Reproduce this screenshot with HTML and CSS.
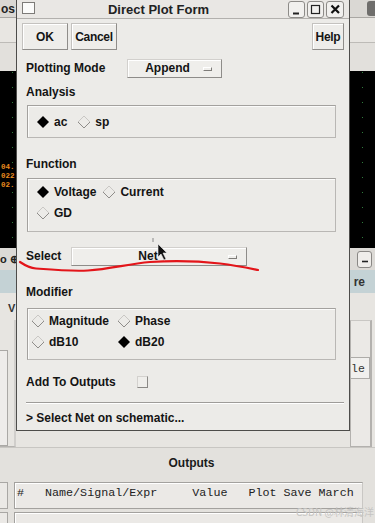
FILE: index.html
```html
<!DOCTYPE html>
<html>
<head>
<meta charset="utf-8">
<link rel="stylesheet" href="styles.css">
</head>
<body>
<div class="desktop">
  <div class="bg-title"><span class="bg-title-text">os</span><span class="bg-title-btn"></span></div>
  <div class="bg-toolbar"><div class="bg-toolbar-top"></div></div>
  <div class="bg-plot">
    <div class="plot-left"><span>04.</span><span>022</span><span>02.</span></div>
    <div class="plot-right"></div>
  </div>
  <div class="bg-bar"><span class="bg-bar-text">o ⊕</span><span class="mini-btn"><svg width="8" height="8" viewBox="0 0 8 8"><path d="M1 6.5H7" stroke="#222" stroke-width="1.6"/></svg></span></div>
  <div class="bg-header"><span>re</span></div>
  <div class="bg-body">
    <div class="body-left">
      <div class="v-text">V</div>
      <div class="left-frame"><div class="left-box"></div></div>
    </div>
    <div class="body-right">
      <div class="right-frame"><div class="le-box">le</div></div>
    </div>
  </div>
  <div class="bg-outputs">
    <div class="outputs-title">Outputs</div>
    <div class="out-row"><div class="mini-cell"></div><div class="out-cell out-head">#   Name/Signal/Expr     Value   Plot Save March</div></div>
    <div class="out-row"><div class="mini-cell"></div><div class="out-cell"></div></div>
  </div>
</div>

<div class="dialog">
  <div class="dlg-title">
    <span class="dlg-icon"></span>
    <span class="dlg-title-text">Direct Plot Form</span>
    <span class="wbtn"><svg width="15" height="15" viewBox="0 0 15 15"><path d="M4 11.5H10" stroke="#222" stroke-width="2"/></svg></span>
    <span class="wbtn"><svg width="15" height="15" viewBox="0 0 15 15"><rect x="3.5" y="3.5" width="8" height="8" fill="none" stroke="#222" stroke-width="1.2"/></svg></span>
    <span class="wbtn wbtn-x"><svg width="15" height="15" viewBox="0 0 15 15"><path d="M3.5 3.5L11 11M11 3.5L3.5 11" stroke="#111" stroke-width="2.2"/></svg></span>
  </div>
  <div class="dlg-buttons">
    <div class="btn btn-ok">OK</div>
    <div class="btn btn-cancel">Cancel</div>
    <div class="spacer"></div>
    <div class="btn btn-help">Help</div>
  </div>
  <div class="dlg-body">
    <div class="row row-mode">
      <span class="lbl lbl-mode">Plotting Mode</span>
      <span class="combo combo-mode"><span class="combo-text">Append</span><span class="combo-ind"></span></span>
    </div>
    <div class="section-label sl-analysis">Analysis</div>
    <div class="group group-analysis">
      <span class="radio"><svg class="dia" width="14" height="14" viewBox="0 0 14 14"><path d="M7 1L13 7L7 13L1 7Z" fill="#000"/></svg>ac</span>
      <span class="radio radio-sp"><svg class="dia" width="14" height="14" viewBox="0 0 14 14"><path d="M1 7L7 1L13 7" fill="none" stroke="#c9c7c4"/><path d="M1 7L7 13L13 7" fill="none" stroke="#8e8c89"/></svg>sp</span>
    </div>
    <div class="section-label sl-function">Function</div>
    <div class="group group-function">
      <div class="grow">
        <span class="radio"><svg class="dia" width="14" height="14" viewBox="0 0 14 14"><path d="M7 1L13 7L7 13L1 7Z" fill="#000"/></svg>Voltage</span>
        <span class="radio radio-current"><svg class="dia" width="14" height="14" viewBox="0 0 14 14"><path d="M1 7L7 1L13 7" fill="none" stroke="#c9c7c4"/><path d="M1 7L7 13L13 7" fill="none" stroke="#8e8c89"/></svg>Current</span>
      </div>
      <div class="grow">
        <span class="radio"><svg class="dia" width="14" height="14" viewBox="0 0 14 14"><path d="M1 7L7 1L13 7" fill="none" stroke="#c9c7c4"/><path d="M1 7L7 13L13 7" fill="none" stroke="#8e8c89"/></svg>GD</span>
      </div>
    </div>
    <div class="row row-select">
      <span class="lbl lbl-select">Select</span>
      <span class="combo combo-select"><span class="combo-text">Net</span><span class="combo-ind"></span></span>
    </div>
    <div class="section-label sl-modifier">Modifier</div>
    <div class="group group-modifier">
      <span class="radio"><svg class="dia" width="14" height="14" viewBox="0 0 14 14"><path d="M1 7L7 1L13 7" fill="none" stroke="#c9c7c4"/><path d="M1 7L7 13L13 7" fill="none" stroke="#8e8c89"/></svg>Magnitude</span>
      <span class="radio"><svg class="dia" width="14" height="14" viewBox="0 0 14 14"><path d="M1 7L7 1L13 7" fill="none" stroke="#c9c7c4"/><path d="M1 7L7 13L13 7" fill="none" stroke="#8e8c89"/></svg>Phase</span>
      <span class="radio"><svg class="dia" width="14" height="14" viewBox="0 0 14 14"><path d="M1 7L7 1L13 7" fill="none" stroke="#c9c7c4"/><path d="M1 7L7 13L13 7" fill="none" stroke="#8e8c89"/></svg>dB10</span>
      <span class="radio"><svg class="dia" width="14" height="14" viewBox="0 0 14 14"><path d="M7 1L13 7L7 13L1 7Z" fill="#000"/></svg>dB20</span>
    </div>
    <div class="row row-add">
      <span class="lbl lbl-add">Add To Outputs</span>
      <span class="checkbox"></span>
    </div>
    <div class="separator"></div>
    <div class="select-net">&gt; Select Net on schematic...</div>
  </div>
</div>

<svg class="overlay" width="375" height="523" viewBox="0 0 375 523">
  <path d="M20 262 C26 266 30 268 36 268.5 C55 270 72 271.5 88 270.5 C110 269 128 264 150 262 C172 260.5 198 261 220 263.5 C236 265.5 248 268 258 270" fill="none" stroke="#e3151a" stroke-width="2.2" stroke-linecap="round"/>
  <path d="M153 238V242" stroke="#888" stroke-width="1"/>
  <path d="M158 244L158 257L161 254L164 260L166 259L163 253L167 253Z" fill="#111" stroke="#eee" stroke-width="0.6"/>
</svg>
<div class="watermark">CSDN @林清海洋</div>
</body>
</html>
```

FILE: styles.css
```css
* { box-sizing: border-box; margin: 0; padding: 0; }
html, body { width: 375px; height: 523px; overflow: hidden; }
body {
  font-family: "Liberation Sans", Arial, sans-serif;
  font-weight: bold;
  font-size: 12px;
  color: #141414;
  background: #e5e3df;
  position: relative;
}

/* ---------- background windows ---------- */
.desktop { width: 375px; height: 523px; display: flex; flex-direction: column; }
.bg-title {
  height: 18px; flex: none; display: flex; align-items: center; justify-content: space-between;
  background: #dad8d4; border-bottom: 1px solid #a9a7a3; overflow: hidden;
}
.bg-title-text { font-size: 12px; margin-left: 1px; color: #222; }
.bg-title-btn { width: 14px; height: 15px; margin-right: -6px; background: #6f6e6c; border-radius: 3px; }
.bg-toolbar { height: 53px; flex: none; background: #e2e0dc; }
.bg-toolbar-top { height: 25px; border-bottom: 1px solid #bdbbb7; background: #e8e6e2; }
.bg-plot { height: 177px; flex: none; background: #000; display: flex; justify-content: space-between; }
.plot-left {
  width: 17px; display: flex; flex-direction: column; padding-top: 92px;
  background: linear-gradient(#2e7c3c 0 1px, transparent 1px) 12px 1px / 1px 15px repeat-y;
  font-family: "Liberation Mono", monospace; font-size: 7.5px; line-height: 9px; color: #e88a1e;
  white-space: nowrap;
}
.plot-left span { margin-left: 1px; }
.plot-right {
  width: 25px;
  background: linear-gradient(#2e7c3c 0 1px, transparent 1px) 12px 1px / 1px 15px repeat-y;
}
.bg-bar { height: 22px; flex: none; background: #dcdad6; display: flex; justify-content: space-between; align-items: center; }
.bg-bar-text { font-size: 11px; margin-left: 0; color: #222; }
.mini-btn {
  width: 15px; height: 17px; margin-right: 3px; border: 1px solid #8a8885; border-radius: 3px;
  background: #efedea; display: flex; align-items: center; justify-content: center;
}
.bg-header { height: 23px; flex: none; background: #c4d2d5; display: flex; justify-content: flex-end; align-items: flex-end; padding: 0 10px 4px 0; }
.bg-header span { font-size: 12px; color: #333; }
.bg-body { height: 154px; flex: none; display: flex; justify-content: space-between; background: #e7e5e1; }
.body-left { width: 17px; display: flex; flex-direction: column; }
.v-text { height: 27px; padding: 9px 0 0 8px; font-size: 11px; color: #333; }
.left-frame { flex: 1; width: 16px; border-right: 2px solid #d0cecb; border-bottom: 1px solid #b5b3b0; }
.left-box { width: 8px; height: 96px; margin-top: 30px; border: 1px solid #aaa8a5; border-left: none; background: #eeecea; }
.body-right { width: 25px; display: flex; flex-direction: column; justify-content: flex-end; }
.right-frame {
  height: 127px; margin-right: 3px; padding-top: 36px; border: 1px solid #b3b1ae; border-top-color: #c9c7c4;
  border-right-width: 2px; background: #ebe9e6;
}
.le-box {
  height: 22px; border: 1px solid #aeaca9; border-left: none; padding: 4px 0 0 0;
  font-family: "Liberation Mono", monospace; font-weight: normal; font-size: 11.5px; color: #333; background: #f1f0ee;
}
.bg-outputs { flex: 1; background: #e3e1dd; border-top: 1px solid #c8c6c2; }
.outputs-title { text-align: center; padding: 8px 0 0 8px; line-height: 14px; height: 34px; color: #1a1a1a; }
.out-row { display: flex; height: 27px; margin-bottom: 3px; }
.mini-cell { width: 8px; border: 1px solid #a9a7a4; border-left: none; background: #ebe9e6; }
.out-cell {
  width: 349px; margin-left: 6px; border: 1px solid #a3a19e; border-right-color: #c9c7c4;
  background: #ebe9e6; box-shadow: inset 1px 1px 0 #fff;
}
.out-head {
  font-family: "Liberation Mono", "Courier New", monospace; font-weight: normal; font-size: 11.7px;
  white-space: pre; padding: 3px 0 0 2px; color: #222;
}

/* ---------- dialog ---------- */
.dialog {
  position: absolute; left: 16px; top: 0; width: 334px; height: 431px;
  background: #ecebe8; border: 1px solid #4d4c4a; border-top: none;
  display: flex; flex-direction: column;
}
.dlg-title {
  height: 19px; flex: none; display: flex; align-items: center; padding: 0 5px 0 5px;
  background: #e9e7e4; border-bottom: 1px solid #b2b0ad;
}
.dlg-icon { width: 13px; height: 12px; border: 1px solid #7d7b78; background: #fbfbfa; margin-top: -2px; }
.dlg-title-text { flex: 1; text-align: center; font-size: 13px; color: #222; padding-right: 4px; }
.wbtn {
  width: 17px; height: 17px; margin-left: 2px; border: 1px solid #8d8b88; border-radius: 3px;
  background: #f1f0ee; display: flex; align-items: center; justify-content: center;
}
.wbtn-x { width: 18px; }
.dlg-buttons { height: 31px; flex: none; display: flex; padding: 4px 5px 0 5px; }
.btn {
  height: 27px; display: flex; align-items: center; justify-content: center;
  background: #eeedea; border: 1px solid #c4c2bf; border-right-color: #8f8d8a; border-bottom-color: #8f8d8a;
  box-shadow: inset 1px 1px 0 #fff; color: #151515;
}
.btn-ok { width: 46px; }
.btn-cancel { width: 46px; margin-left: 3px; letter-spacing: -0.3px; }
.btn-help { width: 32px; letter-spacing: -0.3px; }
.spacer { flex: 1; }
.dlg-body { padding: 0 5px 0 9px; display: flex; flex-direction: column; }
.row { display: flex; align-items: center; height: 20px; }
.row-mode { margin-top: 8px; }
.lbl { flex: none; }
.lbl-mode { width: 101px; }
.lbl-select { width: 45px; }
.lbl-add { width: 111px; }
.combo {
  height: 19px; display: flex; align-items: center; background: #efeeeb;
  border: 1px solid #d2d0cd; border-right-color: #8e8c89; border-bottom-color: #8e8c89;
  box-shadow: inset 1px 1px 0 #fff;
}
.combo-mode { width: 95px; }
.combo-select { width: 176px; }
.combo-text { flex: 1; text-align: center; }
.combo-mode .combo-text { padding-left: 8px; }
.combo-ind {
  width: 9px; height: 4px; margin: 2px 9px 0 4px;
  border: 1px solid #fff; border-right-color: #7e7c79; border-bottom-color: #7e7c79;
}
.section-label { line-height: 14px; height: 14px; }
.sl-analysis { margin-top: 7px; }
.sl-function { margin-top: 19px; }
.sl-modifier { margin-top: 19px; }
.group {
  margin-left: 1px; width: 309px; border: 1px solid #a3a19e; border-right-color: #b9b7b4; border-bottom-color: #b9b7b4;
  box-shadow: inset 1px 1px 0 #fbfbfa; background: #ecebe8;
}
.group-analysis { margin-top: 6px; height: 33px; display: flex; align-items: center; padding: 1px 0 0 8px; }
.radio { display: flex; align-items: center; line-height: 14px; height: 14px; white-space: nowrap; }
.dia { margin-right: 4px; flex: none; }
.radio-sp { margin-left: 10px; }
.group-function { margin-top: 7px; height: 54px; padding: 6px 0 0 8px; }
.grow { display: flex; height: 14px; margin-bottom: 7px; }
.radio-current { margin-left: 6px; }
.row-select { margin-top: 14px; }
.group-modifier {
  margin-top: 9px; height: 52px; padding: 5px 0 0 3px;
  display: grid; grid-template-columns: 86px auto; row-gap: 7px; align-content: start;
}
.row-add { margin-top: 15px; height: 14px; }
.checkbox {
  width: 11px; height: 12px; background: #efeeeb;
  border: 1px solid #d3d1ce; border-right-color: #8b8986; border-bottom-color: #8b8986;
}
.separator { margin-top: 13px; height: 2px; border-top: 1px solid #9e9c99; border-bottom: 1px solid #fff; }
.select-net { margin-top: 7px; line-height: 14px; height: 14px; }

/* ---------- overlays ---------- */
.overlay { position: absolute; left: 0; top: 0; pointer-events: none; }
.watermark {
  position: absolute; left: 296px; top: 504px;
  font-family: "Noto Sans CJK SC", "Liberation Sans", sans-serif; font-weight: normal; font-size: 10px;
  color: #c6c5c3; white-space: nowrap;
}
```
